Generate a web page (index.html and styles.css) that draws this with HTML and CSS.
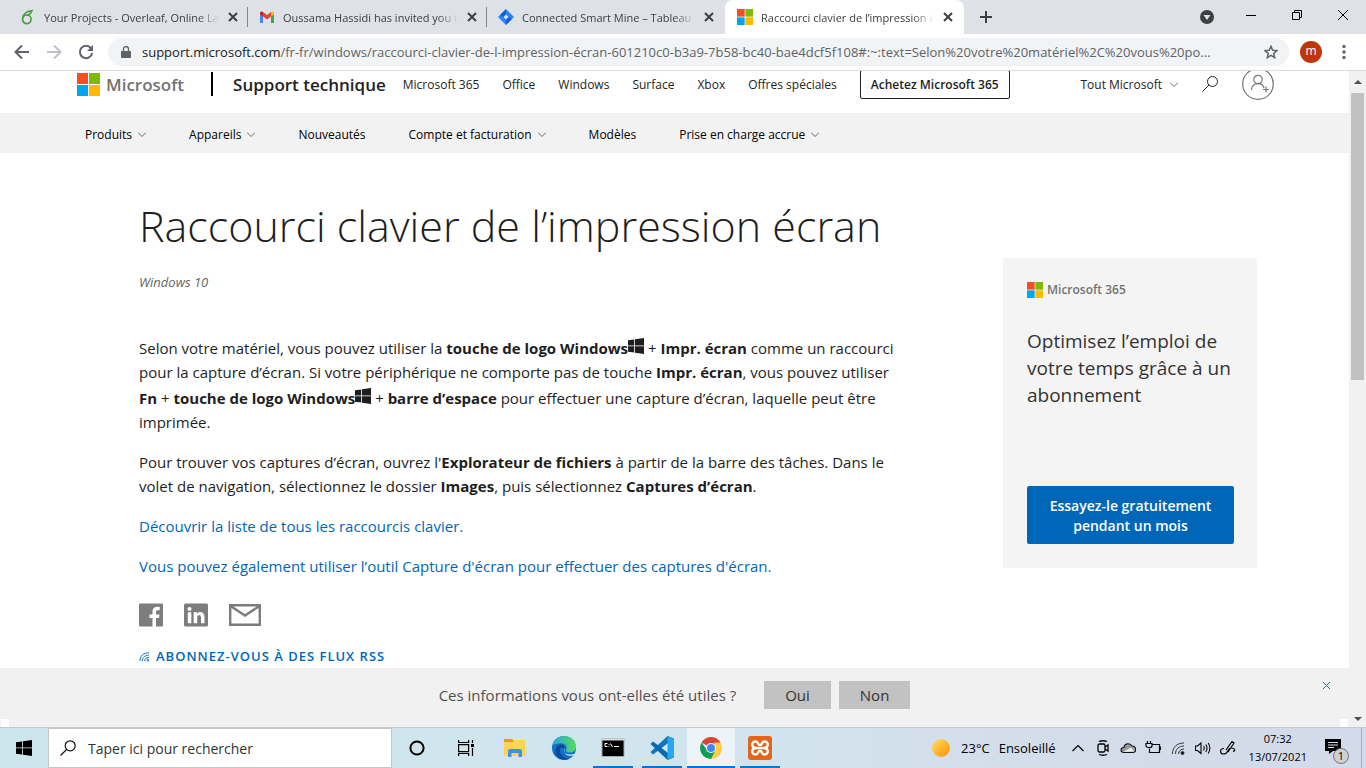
FILE: index.html
```html
<!DOCTYPE html>
<html lang="fr">
<head>
<meta charset="utf-8">
<title>Raccourci clavier de l’impression écran</title>
<link rel="stylesheet" href="styles.css">
</head>
<body>
<svg class="defs" aria-hidden="true">
  <symbol id="ms" viewBox="0 0 23 23"><path fill="#f25022" d="M0 0h11v11H0z"/><path fill="#7fba00" d="M12 0h11v11H12z"/><path fill="#00a4ef" d="M0 12h11v11H0z"/><path fill="#ffb900" d="M12 12h11v11H12z"/></symbol>
  <symbol id="win" viewBox="0 0 16 16"><path d="M0 2.200 6.200 1.400V7.500H0zM7 1.300 16 0v7.500H7zM0 8.300h6.200v6.200L0 13.700zM7 8.300h9V16l-9-1.300z"/></symbol>
  <symbol id="x" viewBox="0 0 10 10"><path d="M1 1l8 8M9 1L1 9" fill="none" stroke="currentColor"/></symbol>
  <symbol id="chev" viewBox="0 0 8 5"><path d="M0 .5l4 4 4-4" fill="none" stroke="currentColor"/></symbol>
</svg>

<header class="tabs">
  <div class="tab">
    <svg class="fav" viewBox="0 0 16 16" fill="none" stroke="#47a141" stroke-width="1.700"><circle cx="6.800" cy="10.300" r="4.300"/><path d="M2.600 9.500C3 5 7 2 13 1.500M6.500 6c3 .2 4.500-1.500 5-4.300"/></svg>
    <span class="tab-title">Your Projects - Overleaf, Online LaTeX</span>
    <button class="tab-x" aria-label="Fermer"><svg><use href="#x"/></svg></button>
  </div>
  <div class="tab">
    <svg class="fav" viewBox="0 0 16 16"><path fill="#4285f4" d="M1 4l3 2v8H2a1 1 0 0 1-1-1z"/><path fill="#34a853" d="M12 6l3-2v9a1 1 0 0 1-1 1h-2z"/><path fill="#ea4335" d="M4 3l4 3 4-3v4.500l-4 3-4-3z"/><path fill="#c5221f" d="M1 4.500C1 2 3 2 4 3v4.500L1 5.500z"/><path fill="#fbbc04" d="M15 4.500C15 2 13 2 12 3v4.500l3-2z"/></svg>
    <span class="tab-title">Oussama Hassidi has invited you to</span>
    <button class="tab-x" aria-label="Fermer"><svg><use href="#x"/></svg></button>
  </div>
  <div class="tab last">
    <svg class="fav" viewBox="0 0 16 16"><path fill="#2684ff" d="M8 0l8 8-8 8-8-8z"/><path fill="#0052cc" d="M8 0v5.500L5.500 8 2 5.900zM8 16v-5.500L10.500 8l3.500 2z" opacity=".7"/><path fill="#dee1e6" d="M8 5.500L10.500 8 8 10.500 5.500 8z"/></svg>
    <span class="tab-title">Connected Smart Mine – Tableau de bord</span>
    <button class="tab-x" aria-label="Fermer"><svg><use href="#x"/></svg></button>
  </div>
  <div class="tab active">
    <svg class="fav"><use href="#ms"/></svg>
    <span class="tab-title">Raccourci clavier de l’impression écran</span>
    <button class="tab-x" aria-label="Fermer"><svg><use href="#x"/></svg></button>
  </div>
  <button class="newtab" aria-label="Nouvel onglet"><svg viewBox="0 0 12 12"><path d="M6 0v12M0 6h12" stroke="#3c4043" stroke-width="2"/></svg></button>
  <div class="wins">
    <svg class="w14" viewBox="0 0 14 14"><circle cx="7" cy="7" r="7" fill="#3c4043"/><path fill="#dee1e6" d="M3.500 5h7L7 10z"/></svg>
    <button aria-label="Réduire"><svg viewBox="0 0 10 10"><path d="M0 5.500h10" stroke="#000"/></svg></button>
    <button aria-label="Restaurer"><svg viewBox="0 0 10 10"><path d="M.5 2.500h7v7h-7zM2.500 2.500v-2h7v7h-2" fill="none" stroke="#000"/></svg></button>
    <button aria-label="Fermer la fenêtre"><svg viewBox="0 0 10 10"><path d="M0 0l10 10M10 0L0 10" stroke="#000"/></svg></button>
  </div>
</header>

<div class="toolbar">
  <button class="tool" aria-label="Précédent"><svg viewBox="0 0 16 16" fill="none" stroke="#5f6368" stroke-width="2"><path d="M15 8H2M8 1.500L1.500 8 8 14.500"/></svg></button>
  <button class="tool" aria-label="Suivant"><svg viewBox="0 0 16 16" fill="none" stroke="#bdc1c6" stroke-width="2"><path d="M1 8h13M8 1.500L14.500 8 8 14.500"/></svg></button>
  <button class="tool" aria-label="Actualiser"><svg viewBox="0 0 16 16"><path d="M13 4.200A6.200 6.200 0 1 0 14.200 9" fill="none" stroke="#5f6368" stroke-width="2"/><path d="M15 1v6H9z" fill="#5f6368"/></svg></button>
  <div class="omni">
    <svg class="lock" viewBox="0 0 10 12"><path d="M1 5h8a1 1 0 0 1 1 1v5a1 1 0 0 1-1 1H1a1 1 0 0 1-1-1V6a1 1 0 0 1 1-1z" fill="#5f6368"/><path d="M2.500 5V3a2.500 2.500 0 0 1 5 0v2" fill="none" stroke="#5f6368" stroke-width="1.300"/></svg>
    <span class="url"><b>support.microsoft.com</b>/fr-fr/windows/raccourci-clavier-de-l-impression-écran-601210c0-b3a9-7b58-bc40-bae4dcf5f108#:~:text=Selon%20votre%20matériel%2C%20vous%20po...</span>
    <svg class="w14" viewBox="0 0 14 14"><path d="M7 1.300l1.700 3.900 4.200.4-3.200 2.800 1 4.200L7 10.400l-3.700 2.200 1-4.200L1.100 5.600l4.200-.4z" fill="none" stroke="#5f6368" stroke-width="1.500"/></svg>
  </div>
  <span class="profile">m</span>
  <button class="tool dots" aria-label="Menu"><svg viewBox="0 0 16 16" fill="#5f6368"><circle cx="8" cy="2.500" r="1.700"/><circle cx="8" cy="8" r="1.700"/><circle cx="8" cy="13.500" r="1.700"/></svg></button>
</div>

<div class="view">
  <div class="page">
    <div class="scroll">
      <div class="site">
        <a class="brand" href="#"><svg><use href="#ms"/></svg>Microsoft</a>
        <span class="bar"></span>
        <a class="support" href="#">Support technique</a>
        <nav class="links"><a href="#">Microsoft 365</a><a href="#">Office</a><a href="#">Windows</a><a href="#">Surface</a><a href="#">Xbox</a><a href="#">Offres spéciales</a></nav>
        <a class="buy" href="#">Achetez Microsoft 365</a>
        <div class="right">
          <button class="all">Tout Microsoft <svg class="chev"><use href="#chev"/></svg></button>
          <button aria-label="Rechercher"><svg class="w16" viewBox="0 0 16 16" fill="none" stroke="#222"><circle cx="10.500" cy="5.500" r="5"/><path d="M7 9L.5 15.500"/></svg></button>
          <button class="avatar" aria-label="Se connecter"><svg viewBox="0 0 32 32" fill="none" stroke="#777" stroke-width="1.200"><circle cx="16" cy="16" r="15.300"/><circle cx="16" cy="11.500" r="4.200"/><path d="M9.500 22c.3-8 11-8 12.500-2M24 18.500v6M21 21.500h6"/></svg></button>
        </div>
      </div>
      <nav class="subnav">
        <a href="#">Produits<svg class="chev"><use href="#chev"/></svg></a><a href="#">Appareils<svg class="chev"><use href="#chev"/></svg></a><a href="#">Nouveautés</a><a href="#">Compte et facturation<svg class="chev"><use href="#chev"/></svg></a><a href="#">Modèles</a><a href="#">Prise en charge accrue<svg class="chev"><use href="#chev"/></svg></a>
      </nav>
      <div class="cols">
        <main class="article">
          <h1>Raccourci clavier de l’impression écran</h1>
          <p class="applies">Windows 10</p>
          <p>Selon votre matériel, vous pouvez utiliser la <b>touche de logo Windows</b><svg class="key"><use href="#win"/></svg> + <b>Impr. écran</b> comme un raccourci<br>pour la capture d’écran. Si votre périphérique ne comporte pas de touche <b>Impr. écran</b>, vous pouvez utiliser<br><b>Fn</b> + <b>touche de logo Windows</b><svg class="key"><use href="#win"/></svg> + <b>barre d’espace</b> pour effectuer une capture d’écran, laquelle peut être<br>imprimée.</p>
          <p>Pour trouver vos captures d’écran, ouvrez l'<b>Explorateur de fichiers</b> à partir de la barre des tâches. Dans le<br>volet de navigation, sélectionnez le dossier <b>Images</b>, puis sélectionnez <b>Captures d’écran</b>.</p>
          <p><a href="#">Découvrir la liste de tous les raccourcis clavier.</a></p>
          <p><a href="#">Vous pouvez également utiliser l’outil Capture d'écran pour effectuer des captures d'écran.</a></p>
          <div class="share">
            <a href="#" aria-label="Facebook"><svg class="w24" viewBox="0 0 24 24"><path fill="#7d7d7d" d="M1 .5h22a1 1 0 0 1 1 1v21a1 1 0 0 1-1 1h-6V15h3l.5-3.500H17V9c0-1.300.4-1.800 2-1.800h1.700V4c-4.700-.8-7.200.7-7.200 4.500v3h-3V15h3v8.500H1a1 1 0 0 1-1-1v-21a1 1 0 0 1 1-1z"/></svg></a>
            <a href="#" aria-label="LinkedIn"><svg class="w24" viewBox="0 0 24 24"><rect y=".5" width="24" height="23" rx="1.500" fill="#7d7d7d"/><circle cx="5.500" cy="6" r="2" fill="#fff"/><path fill="#fff" d="M3.800 9.300h3.500v11H3.800zM9.700 9.300h3.400v1.500c2-3 7.400-2.200 7.400 3.200v6.300H17v-6c0-3-3.800-2.800-3.800 0v6H9.700z"/></svg></a>
            <a href="#" aria-label="E-mail"><svg class="mail" viewBox="0 0 32 22" fill="none" stroke="#7d7d7d" stroke-width="2.400"><path d="M1.200 1.200h29.600v19.600H1.200zM1.500 2L16 11.500 30.500 2"/></svg></a>
          </div>
          <a class="rss" href="#"><svg viewBox="0 0 12 12" fill="none" stroke="currentColor"><path d="M1 11C1 5 5 2 11 2M3.500 11c0-4 3-6.500 7.500-6.500M6 11c0-2.500 2-4 5-4"/><circle cx="9.500" cy="10" r="1"/></svg>ABONNEZ-VOUS À DES FLUX RSS</a>
        </main>
        <aside class="card">
          <div class="m365"><svg><use href="#ms"/></svg>Microsoft 365</div>
          <h2>Optimisez l’emploi de votre temps grâce à un abonnement</h2>
          <a class="try" href="#">Essayez-le gratuitement pendant un mois</a>
        </aside>
      </div>
    </div>
    <div class="feedback">
      <span>Ces informations vous ont-elles été utiles ?</span>
      <button>Oui</button><button>Non</button>
      <button class="dismiss" aria-label="Fermer"><svg><use href="#x"/></svg></button>
    </div>
  </div>
  <div class="sbar"><svg viewBox="0 0 8 4"><path d="M0 4l4-4 4 4z"/></svg><div class="track"><div class="thumb"></div></div><svg viewBox="0 0 8 4"><path d="M0 0l4 4 4-4z"/></svg></div>
</div>

<footer class="taskbar">
  <button class="start" aria-label="Démarrer"><svg class="w16"><use href="#win"/></svg></button>
  <label class="search"><svg class="w16" viewBox="0 0 16 16" fill="none" stroke="#111" stroke-width="1.200"><circle cx="10.200" cy="5.800" r="5"/><path d="M6.800 9.300L.5 15.500"/></svg><input type="text" placeholder="Taper ici pour rechercher" aria-label="Taper ici pour rechercher"></label>
  <div class="apps">
    <button aria-label="Cortana"><svg class="w16" viewBox="0 0 16 16"><circle cx="8" cy="8" r="6.600" fill="none" stroke="#000" stroke-width="2"/></svg></button>
    <button aria-label="Affichage des tâches"><svg class="w16" viewBox="0 0 16 16" fill="none" stroke="#000" stroke-width="1.200"><path d="M.6 4.600h10v7H.6zM.6 0v2.500h10V0M.6 16v-2.500h10V16M14.500 0v3M14.500 8v8"/><path d="M13 4h3v3h-3z" fill="#000" stroke="none"/></svg></button>
    <button aria-label="Explorateur"><svg class="w24" viewBox="0 0 24 24"><path fill="#e5a000" d="M1 3h8l2 2v5H1z"/><path fill="#ffd35b" d="M1 6h9l1-2h11v16H1z"/><path fill="#3d94d9" d="M5 21v-6a2 2 0 0 1 2-2h10a2 2 0 0 1 2 2v6h-3.500v-4h-7v4z"/></svg></button>
    <button aria-label="Edge"><svg class="w24" viewBox="0 0 24 24"><defs><linearGradient id="eg"><stop stop-color="#2ba5dd"/><stop offset="1" stop-color="#56dc5c"/></linearGradient></defs><circle cx="12" cy="12" r="12" fill="#1170c4"/><path fill="url(#eg)" d="M.2 10C1 4 6 0 12 0c7 0 12 5 12 10.500 0 4-3 6-6.500 6-3 0-4-1.300-3.500-2.300 2-3 0-7-5-7C5 7.200 1.500 8 .2 10z"/><path fill="#0c479c" d="M8 13c-1 5 3 9.500 9 10-7 2.500-14-2-13.500-8 .3-4 3-6.500 6-6.500C12 9 13 11 12.500 12.500 11 11.500 8.500 11 8 13z"/><path fill="#d1e5ee" d="M12.500 12.500c-1.200 1.500-.5 6 5 6 2.500 0 4.500-.8 5.300-.5L24 17v7l-5-1.500 3.500-3.800c-6 3-11 0-10-6.200z"/></svg></button>
    <button class="run" aria-label="Invite de commandes"><svg class="w24" viewBox="0 0 24 24"><path fill="#000" stroke="#aaa" d="M1 2.500h22v18H1z"/><path fill="#ddd" d="M1 2.500h22v2H1z"/><path d="M6.500 7.500H4v3h2.500M8 8v.8M8 10v.8M9.500 7.500l2 3.500M13 10.500h5" fill="none" stroke="#fff"/></svg></button>
    <button class="run" aria-label="Visual Studio Code"><svg class="w24" viewBox="0 0 24 24"><path fill="#1076bb" d="M17.500 0L24 2.500 3 18.500.5 16z"/><path fill="#0a6ab0" d="M.5 8L3 5.500l21 16L17.500 24z"/><path fill="#27a5f1" d="M17.500 0L24 3v18l-6.500 3z"/></svg></button>
    <button class="run cur" aria-label="Chrome"><svg class="w24" viewBox="0 0 24 24"><path fill="#db4437" d="M2.500 6.500a11 11 0 0 1 19 0L12 12z"/><path fill="#ffcd40" d="M21.500 6.500A11 11 0 0 1 12 23l2-9 1.500-7.500z"/><path fill="#0f9d58" d="M2.500 6.500A11 11 0 0 0 12 23l4-8-8-1z"/><circle cx="12" cy="12" r="5" fill="#fff"/><circle cx="12" cy="12" r="4" fill="#4285f4"/></svg></button>
    <button class="run" aria-label="XAMPP"><svg class="w24" viewBox="0 0 24 24"><rect width="24" height="24" rx="3" fill="#e3651d"/><path d="M8 12h8M8.500 12C3 12 3 5.500 7.500 5.500 11 5.500 9 9 12 9s1-3.500 4.500-3.500C21 5.500 21 12 15.500 12 21 12 21 18.500 16.500 18.500 13 18.500 15 15 12 15s-1 3.500-4.500 3.500C3 18.500 3 12 8.500 12z" fill="none" stroke="#fff" stroke-width="2.400"/></svg></button>
  </div>
  <div class="tray">
    <svg class="sun" viewBox="0 0 18 18"><defs><linearGradient id="sg" x2="1" y2="1"><stop stop-color="#ffe066"/><stop offset="1" stop-color="#ff9000"/></linearGradient></defs><circle cx="9" cy="9" r="9" fill="url(#sg)"/></svg>
    <span class="temp">23°C</span><span class="meteo">Ensoleillé</span>
    <div class="icons">
      <svg class="w16" viewBox="0 0 16 16" fill="none" stroke="#000" stroke-width="1.200"><path d="M2.500 11L8 5.500l5.500 5.500"/></svg>
      <svg class="w16" viewBox="0 0 16 16" fill="none" stroke="#000" stroke-width="1.300"><rect x="3" y="4" width="7" height="8" rx="1.500"/><path d="M10 7l3-2v6l-3-2M4 1.500q4-1.500 8 0M4 14.500q4 1.500 8 0"/></svg>
      <svg class="w16" viewBox="0 0 16 16"><path d="M4 12.500c-4 0-4-5 0-5 .5-4.500 6-5 8-1.500 4.500 0 5 6 1 6.500z" fill="#999" stroke="#111" stroke-width="1.100"/><path d="M3 12l8-4.500 3.500 4z" fill="#eee"/></svg>
      <svg class="w16" viewBox="0 0 16 16" fill="none" stroke="#000" stroke-width="1.200"><path d="M7 4.500h7.500v8H4.500V8.500M14.500 7h1.300v3M1 3.500h6v2a2 2 0 0 1-2 2H3a2 2 0 0 1-2-2zM2.500 1v2.500M5.500 1v2.500"/></svg>
      <svg class="w16" viewBox="0 0 16 16" fill="none" stroke="#333"><path d="M2.500 14C2.500 7 7 3 14 3M5.500 14C5.500 9 9 6 14 6M8.500 14c0-3 2.500-5 5.500-5"/><circle cx="12.500" cy="13" r="1.500" fill="#000"/></svg>
      <svg class="w16" viewBox="0 0 16 16" fill="none" stroke="#000" stroke-width="1.100"><path d="M.5 6h2L6 3v10.500L2.500 10.500h-2zM8.500 6q1.500 2 0 4.500M10.800 4.500q2.500 3.700 0 7.500M13.200 3q3.300 5 0 10.500"/></svg>
      <svg class="w16" viewBox="0 0 16 16" fill="none" stroke="#000" stroke-width="1.200"><path d="M4 8.500c-5 0-4 5.500-.5 5.500C9 14 7 8 11 8c4-.2 5 3 2 3.500M6 10L12 1.500l2 1.500-6 9"/></svg>
    </div>
    <time class="clock">07:32<br>13/07/2021</time>
    <div class="notif"><svg viewBox="0 0 24 24"><path d="M0 3h16v12H8l-4 3v-3H0z"/><path d="M3 6.500h10M3 9h10M3 11.500h6" stroke="#d5dcea"/></svg><span>1</span></div>
  </div>
</footer>
</body>
</html>
```
FILE: styles.css
```css
* { box-sizing: border-box; }
body { margin: 0; height: 100vh; display: flex; flex-direction: column; overflow: hidden; font-family: "Open Sans", "Noto Sans", sans-serif; font-size: 12px; color: #1e1e1e; background: #fff; }
button { font: inherit; color: inherit; border: 0; background: none; padding: 0; display: flex; align-items: center; justify-content: center; }
a { color: inherit; text-decoration: none; }
svg { flex: none; display: block; }
.defs { display: none; }
.w14 { width: 14px; height: 14px; }
.w16 { width: 16px; height: 16px; }
.w24 { width: 24px; height: 24px; }
.chev { width: 8px; height: 5px; color: #666; }

.tabs { height: 34px; flex: none; display: flex; background: #dee1e6; padding-left: 10px; }
.tab { flex: 0 1 239px; min-width: 0; display: flex; align-items: center; padding: 0 6px 0 10px; position: relative; color: #3c4043; }
.tab:not(.last):not(.active)::after { content: ""; position: absolute; right: 1px; top: 7px; height: 20px; width: 1px; background: #80868b; }
.tab.active { background: #fff; border-radius: 8px 8px 0 0; padding-left: 12px; }
.tab.last { flex-basis: 237px; }
.fav { width: 16px; height: 16px; margin-right: 8px; }
.tab-title { flex: 1; min-width: 0; white-space: nowrap; overflow: hidden; font-size: 11px; -webkit-mask-image: linear-gradient(90deg, #000 88%, transparent); mask-image: linear-gradient(90deg, #000 88%, transparent); }
.tab-x { width: 10px; height: 10px; margin: 0 5px 0 9px; }
.tab-x svg { width: 10px; height: 10px; stroke-width: 2; }
.newtab { width: 44px; }
.newtab svg { width: 12px; height: 12px; }
.wins { margin-left: auto; display: flex; align-items: center; }
.wins button { width: 46px; height: 29px; align-self: flex-start; }
.wins button svg { width: 10px; height: 10px; }
.wins .w14 { margin-right: 14px; }

.toolbar { height: 37px; flex: none; display: flex; align-items: center; padding: 0 14px; border-bottom: 1px solid #d8dadd; }
.tool { width: 16px; margin-right: 16px; }
.tool svg { width: 16px; height: 16px; }
.omni { flex: 1; min-width: 0; height: 28px; border-radius: 14px; background: #f1f3f4; display: flex; align-items: center; padding: 0 11px 0 13px; margin: 0 11px 0 -2px; }
.lock { width: 10px; height: 12px; margin-right: 11px; }
.url { flex: 1; min-width: 0; overflow: hidden; white-space: nowrap; font-size: 13px; color: #5f6368; }
.url b { font-weight: 400; color: #202124; }
.profile { width: 22px; height: 22px; border-radius: 50%; background: #bf360c; color: #fff; text-align: center; line-height: 20px; margin-right: 14px; }
.dots { margin-right: 0; }

.view { flex: 1; min-height: 0; display: flex; }
.page { flex: 1; min-width: 0; display: flex; flex-direction: column; }
.scroll { flex: 1; min-height: 0; overflow: hidden; }
.site { height: 58px; margin-top: -16px; display: flex; align-items: center; padding: 0 75px 0 77px; color: #222; white-space: nowrap; }
.brand { display: flex; align-items: center; gap: 6px; font-size: 17px; font-weight: 600; color: #737373; }
.brand svg { width: 23px; height: 23px; }
.bar { width: 2px; height: 24px; background: #000; margin: 0 20px 0 27px; }
.support { font-size: 17px; font-weight: 600; }
.links { display: flex; gap: 23px; margin-left: 17px; }
.buy { border: 1px solid #222; border-radius: 2px; font-weight: 600; padding: 5px 10px; margin-left: 23px; }
.right { margin-left: auto; display: flex; align-items: center; gap: 24px; }
.all { gap: 8px; }
.avatar svg { width: 32px; height: 32px; }
.subnav { height: 40px; background: #f2f2f2; display: flex; align-items: center; gap: 43px; padding: 2px 0 0 85px; color: #000; }
.subnav a { display: flex; align-items: center; gap: 6px; }

.cols { display: flex; justify-content: space-between; padding: 0 92px 0 139px; }
.article { flex: 1; white-space: nowrap; font-size: 15px; line-height: 24px; padding-top: 43px; }
h1 { font-weight: 300; font-size: 43px; line-height: 60px; margin: 0 0 14px; }
.article p { margin: 0 0 16px; }
.article .applies { font-size: 13px; font-style: italic; color: #666; margin-bottom: 40px; }
.article p a, .rss { color: #0067b8; }
.key { display: inline-block; width: 16px; height: 16px; margin-top: 4px; vertical-align: 0; fill: #1e1e1e; }
.share { display: flex; align-items: center; gap: 21px; margin-top: 25px; }
.mail { width: 32px; height: 22px; }
.rss { display: flex; align-items: center; gap: 6px; font-size: 13px; font-weight: 600; letter-spacing: 1px; margin-top: 17px; }
.rss svg { width: 11px; height: 11px; }
.card { width: 254px; margin-top: 105px; padding: 23px 23px 24px 24px; background: #f4f4f4; align-self: flex-start; }
.m365 { display: flex; align-items: center; gap: 4px; font-size: 12px; font-weight: 600; color: #737373; line-height: 18px; }
.m365 svg { width: 16px; height: 16px; }
h2 { font-size: 19px; line-height: 27px; font-weight: 400; margin: 29px 0 77px; color: #333; }
.try { display: block; background: #0067b8; color: #fff; font-weight: 600; font-size: 14px; line-height: 20px; text-align: center; padding: 10px 16px 8px; border-radius: 2px; }

.feedback { flex: none; height: 59px; background: #f1f1f1; display: flex; align-items: center; justify-content: center; gap: 8px; position: relative; font-size: 15px; color: #505050; padding-bottom: 5px; }
.feedback::before, .feedback::after { content: ""; position: absolute; bottom: 0; width: 8px; height: 8px; background: #fff; }
.feedback::before { left: 1px; }
.feedback::after { right: 1px; }
.feedback span { margin-right: 20px; }
.feedback button { background: #c2c2c2; color: #333; height: 28px; padding: 0 21px; }
.feedback .dismiss { position: absolute; right: 18px; top: 13px; height: 9px; padding: 0; background: none; color: #23606e; }
.dismiss svg { width: 9px; height: 9px; }
.sbar { width: 17px; flex: none; background: #f1f1f1; display: flex; flex-direction: column; align-items: center; padding: 9px 0 6px; }
.sbar svg { width: 8px; height: 4px; fill: #505050; }
.track { flex: 1; width: 13px; padding-top: 9px; }
.thumb { height: 46%; background: #c1c1c1; }

.taskbar { flex: none; height: 41px; display: flex; border-top: 1px solid #c8c8c8; background: linear-gradient(90deg, #cde5ec, #d1e5ee 50%, #d4dcea 80%, #d3dae9); color: #000; }
.start { width: 48px; }
.search { width: 344px; background: #fff; border: 1px solid #c5c5c5; display: flex; align-items: center; gap: 12px; padding: 0 11px; }
.search input { border: 0; outline: 0; font: inherit; font-size: 14px; flex: 1; min-width: 0; padding: 0; }
.search input::placeholder { color: #333; opacity: 1; }
.apps { display: flex; gap: 1px; margin-left: 1px; }
.apps button { width: 48px; }
.apps .run { background: linear-gradient(#0078d7, #0078d7) center bottom / 40px 2px no-repeat; }
.apps .cur { background: linear-gradient(#0078d7, #0078d7) center bottom / 48px 2px no-repeat #edf4f7; }
.tray { margin: 0 4px 0 auto; display: flex; align-items: center; font-size: 13px; white-space: nowrap; padding-right: 12px; border-right: 1px solid #a9b0bd; }
.sun { width: 18px; height: 18px; margin-right: 11px; }
.temp { margin-right: 9px; }
.meteo { margin-right: 14px; }
.icons { display: flex; gap: 9px; margin-right: 13px; }
.clock { font-size: 11px; line-height: 18px; text-align: center; margin-right: 18px; }
.notif { position: relative; width: 24px; height: 24px; }
.notif svg { width: 24px; height: 24px; }
.notif span { position: absolute; right: 0; bottom: -4px; width: 16px; height: 16px; border: 1px solid #777; border-radius: 50%; background: #cfcfd4; font-size: 11px; line-height: 14px; text-align: center; }
```
